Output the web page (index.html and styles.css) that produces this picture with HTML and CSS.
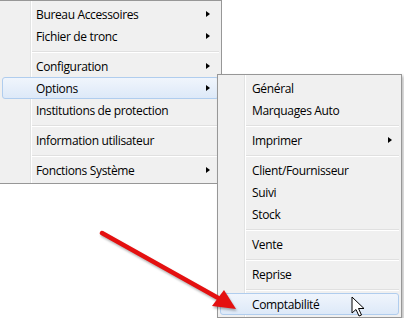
FILE: index.html
```html
<!DOCTYPE html>
<html lang="fr">
<head>
    <meta charset="UTF-8">
    <title>Menu Options</title>
    <link rel="stylesheet" href="styles.css">
</head>
<body>

    <div class="scene">
        <ul class="menu menu-main">
            <li class="item sub">Bureau Accessoires</li>
            <li class="item sub">Fichier de tronc</li>
            <li class="sep"></li>
            <li class="item sub">Configuration</li>
            <li class="item sub active">Options</li>
            <li class="item">Institutions de protection</li>
            <li class="sep"></li>
            <li class="item">Information utilisateur</li>
            <li class="sep"></li>
            <li class="item sub">Fonctions Système</li>
        </ul>

        <ul class="menu menu-options">
            <li class="item">Général</li>
            <li class="item">Marquages Auto</li>
            <li class="sep"></li>
            <li class="item sub">Imprimer</li>
            <li class="sep"></li>
            <li class="item">Client/Fournisseur</li>
            <li class="item">Suivi</li>
            <li class="item">Stock</li>
            <li class="sep"></li>
            <li class="item">Vente</li>
            <li class="sep"></li>
            <li class="item">Reprise</li>
            <li class="sep"></li>
            <li class="item active">Comptabilité</li>
        </ul>

        <!-- fleche rouge + curseur -->
        <svg class="overlay" width="404" height="318" viewBox="0 0 404 318">
            <g class="arrow">
                <line x1="102" y1="233" x2="220" y2="299" stroke="#e41010" stroke-width="4.5" stroke-linecap="round"/>
                <polygon points="236,309 212,306 224,290" fill="#e41010"/>
            </g>
            <path d="M352 297 L352 313 L356 309.5 L359 316 L361.5 315 L358.5 308.5 L364 308.5 Z" fill="#fff" stroke="#000" stroke-width="1" stroke-linejoin="round"/>
        </svg>
    </div>

</body>
</html>
```

FILE: styles.css
```css
body {
    margin: 0;
    background: #fff;
    font-family: "Open Sans", "Liberation Sans", sans-serif;
    font-size: 12px;
    letter-spacing: -0.35px;
    color: #000;
}
.scene {
    position: relative;
    width: 404px;
    height: 318px;
    overflow: hidden;
}
.menu {
    list-style: none;
    margin: 0;
    padding: 2px;
    background-color: #f0f0f0;
    border: 1px solid #979797;
    box-sizing: border-box;
}
.menu-main {
    width: 222px;
    border-left: none;
    background-image: linear-gradient(to right, transparent 30px, #e2e3e3 30px, #e2e3e3 31px, #fff 31px, #fff 32px, transparent 32px);
}
.menu-options {
    position: absolute;
    left: 217px;
    top: 74px;
    width: 185px;
    background-image: linear-gradient(to right, transparent 26px, #e2e3e3 26px, #e2e3e3 27px, #fff 27px, #fff 28px, transparent 28px);
    box-shadow: 2px 2px 3px rgba(0, 0, 0, 0.25);
}
.item {
    position: relative;
    height: 22px;
    line-height: 21px;
    padding-left: 33px;
    border: 1px solid transparent;
    border-radius: 3px;
    box-sizing: border-box;
    white-space: nowrap;
}
.menu-options .item {
    padding-left: 31px;
}
.item.active {
    border-color: #b0cdee;
    background: linear-gradient(#f0f5fc, #dde9f8);
}
.item.sub::after {
    content: "";
    position: absolute;
    right: 8px;
    top: 7px;
    border-left: 4px solid #000;
    border-top: 3.5px solid transparent;
    border-bottom: 3.5px solid transparent;
}
.menu-options .item.sub::after {
    right: 6px;
}
.sep {
    height: 8px;
    margin-left: 30px;
    background: linear-gradient(transparent 4px, #e0e0e0 4px, #e0e0e0 5px, #fff 5px, #fff 6px, transparent 6px);
}
.menu-options .sep {
    margin-left: 26px;
}
.overlay {
    position: absolute;
    left: 0;
    top: 0;
}
.arrow {
    filter: drop-shadow(1px 2px 1px rgba(0, 0, 0, 0.3));
}
```
